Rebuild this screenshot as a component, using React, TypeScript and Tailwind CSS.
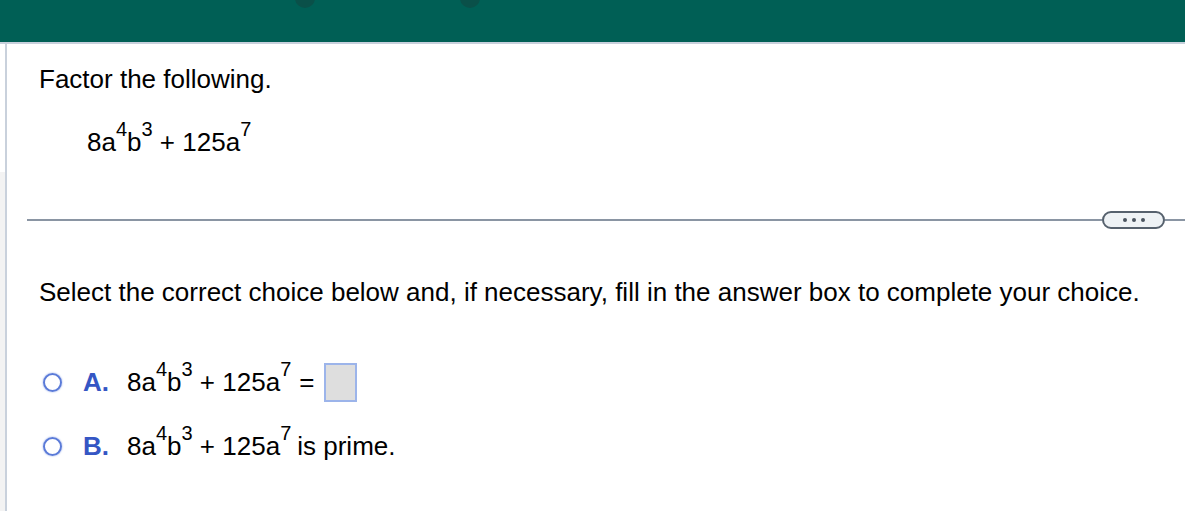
import React from "react";

const Sup = ({ c }: { c: string }) => (
  <span className="text-[20px] relative -top-[15px] align-baseline leading-none">{c}</span>
);

const Expr = () => (
  <span className="whitespace-nowrap">
    8a<Sup c="4" />b<Sup c="3" /> + 125a<Sup c="7" />
  </span>
);

const Radio = () => (
  <span className="inline-block w-[19px] h-[19px] rounded-full border-[2px] border-[#5b7bd8] shadow-[0_0_2px_#8aa2e6]" />
);

export default function App() {
  return (
    <div className="w-[1185px] h-[511px] overflow-hidden bg-white" style={{ fontFamily: '"Liberation Sans", Arial, sans-serif' }}>
      <div className="relative h-[42px] bg-[#005f55] overflow-hidden">
        <div className="absolute left-[295px] -top-[12px] w-[20px] h-[20px] rounded-full bg-[#0a5049]" />
        <div className="absolute left-[460px] -top-[12px] w-[20px] h-[20px] rounded-full bg-[#0a5049]" />
      </div>
      <div className="h-[2px] bg-[#c8d0dc]" />
      <div className="flex h-[467px]">
        <div className="w-[5px] flex flex-col">
          <div className="h-[128px] bg-white" />
          <div className="flex-1 bg-[#f3f3f3]" />
        </div>
        <div className="w-[2px] bg-[#c9d1dc]" />
        <div className="flex-1 text-[26px] text-black">
          <div className="pl-[32px] pt-[20px] leading-[30px]">Factor the following.</div>
          <div className="pl-[80px] pt-[33px] leading-[30px]"><Expr /></div>
          <div className="flex items-center mt-[54px]">
            <div className="ml-[20px] flex-1 h-[2px] bg-[#8a95a3]" />
            <div className="w-[63px] h-[18px] rounded-full border-[2px] border-[#56616d] bg-[#eef2f5] flex items-center justify-center gap-[5px]">
              <span className="w-[4px] h-[4px] rounded-full bg-[#4a545f]" />
              <span className="w-[4px] h-[4px] rounded-full bg-[#4a545f]" />
              <span className="w-[4px] h-[4px] rounded-full bg-[#4a545f]" />
            </div>
            <div className="w-[20px] h-[2px] bg-[#8a95a3]" />
          </div>
          <div className="pl-[32px] pt-[48px] leading-[30px]">Select the correct choice below and, if necessary, fill in the answer box to complete your choice.</div>
          <div className="pl-[36px] pt-[56px] flex items-center h-[94px]">
            <Radio />
            <span className="ml-[21px] w-[44px] font-bold text-[#3556c4]">A.</span>
            <Expr />
            <span className="ml-[8px]">=</span>
            <span className="ml-[10px] inline-block w-[33px] h-[39px] bg-[#dedede] border-[2px] border-[#9cb4ea]" />
          </div>
          <div className="pl-[36px] pt-[26px] flex items-center">
            <Radio />
            <span className="ml-[21px] w-[44px] font-bold text-[#3556c4]">B.</span>
            <Expr />
            <span className="ml-[6px]">is prime.</span>
          </div>
        </div>
      </div>
    </div>
  );
}
